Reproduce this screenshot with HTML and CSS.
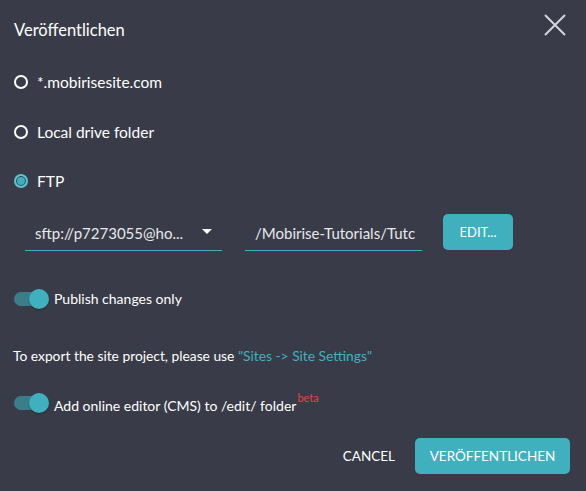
FILE: index.html
```html
<!DOCTYPE html>
<html lang="de">
<head>
  <meta charset="UTF-8" />
  <title>Veröffentlichen</title>
  <link rel="stylesheet" href="styles.css">
</head>
<body>
  <div class="publish-dialog">
    <div class="dialog-header">
      <h2>Veröffentlichen</h2>
      <svg class="close" width="22" height="22" viewBox="0 0 22 22">
        <path d="M1 1 L21 21 M21 1 L1 21" stroke="#d4d6db" stroke-width="2" fill="none"/>
      </svg>
    </div>

    <label class="radio-row"><span class="radio"></span>*.mobirisesite.com</label>
    <label class="radio-row"><span class="radio"></span>Local drive folder</label>
    <label class="radio-row"><span class="radio checked"></span>FTP</label>

    <div class="ftp-row">
      <div class="field select">
        <span class="value">sftp://p7273055@ho...</span>
        <span class="caret"></span>
      </div>
      <div class="field path">
        <span class="value">/Mobirise-Tutorials/Tutc</span>
      </div>
      <button class="btn edit-btn">EDIT...</button>
    </div>

    <div class="toggle-row first">
      <span class="toggle"><span class="knob"></span></span>
      <span>Publish changes only</span>
    </div>

    <p class="export-note">To export the site project, please use <a href="#">"Sites -&gt; Site Settings"</a></p>

    <div class="toggle-row">
      <span class="toggle"><span class="knob"></span></span>
      <span>Add online editor (CMS) to /edit/ folder<sup class="beta">beta</sup></span>
    </div>

    <div class="dialog-actions">
      <button class="btn cancel-btn">CANCEL</button>
      <button class="btn primary-btn">VERÖFFENTLICHEN</button>
    </div>
  </div>
</body>
</html>
```

FILE: styles.css
```css
body {
  margin: 0;
  font-family: Lato, 'Open Sans', sans-serif;
  background-color: #393c48;
  color: #ffffff;
}

.publish-dialog {
  width: 586px;
  height: 491px;
  box-sizing: border-box;
  padding: 0 16px 0 13px;
}

.dialog-header {
  display: flex;
  justify-content: space-between;
  align-items: flex-start;
  height: 72px;
}

.dialog-header h2 {
  margin: 20px 0 0 1px;
  font-size: 16.5px;
  font-weight: 400;
}

.close {
  margin-top: 14px;
  margin-right: 4px;
}

.radio-row {
  display: flex;
  align-items: center;
  height: 20px;
  margin-bottom: 29.5px;
  font-size: 15.5px;
}

.radio {
  flex-shrink: 0;
  width: 10px;
  height: 10px;
  border: 2px solid #ffffff;
  border-radius: 50%;
  margin: 0 9px 0 1px;
  box-sizing: content-box;
}

.radio.checked {
  border-color: #5dc3cf;
  background-color: #40b0bf;
  box-shadow: inset 0 0 0 1px #393c48;
}

.ftp-row {
  display: flex;
  align-items: center;
  margin: -5px 0 0 12px;
  height: 36px;
}

.field {
  display: flex;
  align-items: center;
  height: 34px;
  border-bottom: 1px solid #40b0bf;
  box-sizing: border-box;
  font-size: 15px;
  color: #e7e8eb;
  overflow: hidden;
  white-space: nowrap;
}

.field.select {
  width: 197px;
  padding: 0 10px;
  justify-content: space-between;
}

.field.path {
  width: 177px;
  margin-left: 23px;
  padding-left: 10px;
}

.caret {
  width: 0;
  height: 0;
  border-left: 5px solid transparent;
  border-right: 5px solid transparent;
  border-top: 5px solid #ffffff;
  margin-bottom: 3px;
}

.btn {
  font-family: inherit;
  border: none;
  cursor: pointer;
}

.edit-btn {
  margin-left: 21px;
  width: 70px;
  height: 36px;
  background-color: #40b0bf;
  color: #ffffff;
  border-radius: 5px;
  font-size: 13px;
  margin-bottom: 4px;
}

.toggle-row {
  display: flex;
  align-items: center;
  font-size: 14px;
  height: 24px;
}

.toggle-row.first {
  margin-top: 35px;
}

.toggle {
  position: relative;
  flex-shrink: 0;
  width: 30px;
  height: 14px;
  background-color: #3b7e8a;
  border-radius: 7px;
  margin: 0 10px 0 1px;
}

.knob {
  position: absolute;
  right: -5px;
  top: -3px;
  width: 20px;
  height: 20px;
  border-radius: 50%;
  background-color: #40b0bf;
  box-shadow: 0 1px 2px rgba(0, 0, 0, 0.3);
}

.export-note {
  margin: 35px 0 25px 0;
  font-size: 13.8px;
  line-height: 20px;
}

.export-note a {
  color: #40b0bf;
  text-decoration: none;
}

.beta {
  color: #e0454a;
  font-size: 11px;
  vertical-align: 9px;
  margin-left: 1px;
}

.dialog-actions {
  display: flex;
  justify-content: flex-end;
  align-items: center;
  margin-top: 23px;
}

.cancel-btn {
  background: none;
  color: #ffffff;
  font-size: 13.5px;
  padding: 0;
  margin-right: 20px;
}

.primary-btn {
  width: 155px;
  height: 36px;
  background-color: #40b0bf;
  color: #ffffff;
  border-radius: 5px;
  font-size: 13.5px;
}
```
